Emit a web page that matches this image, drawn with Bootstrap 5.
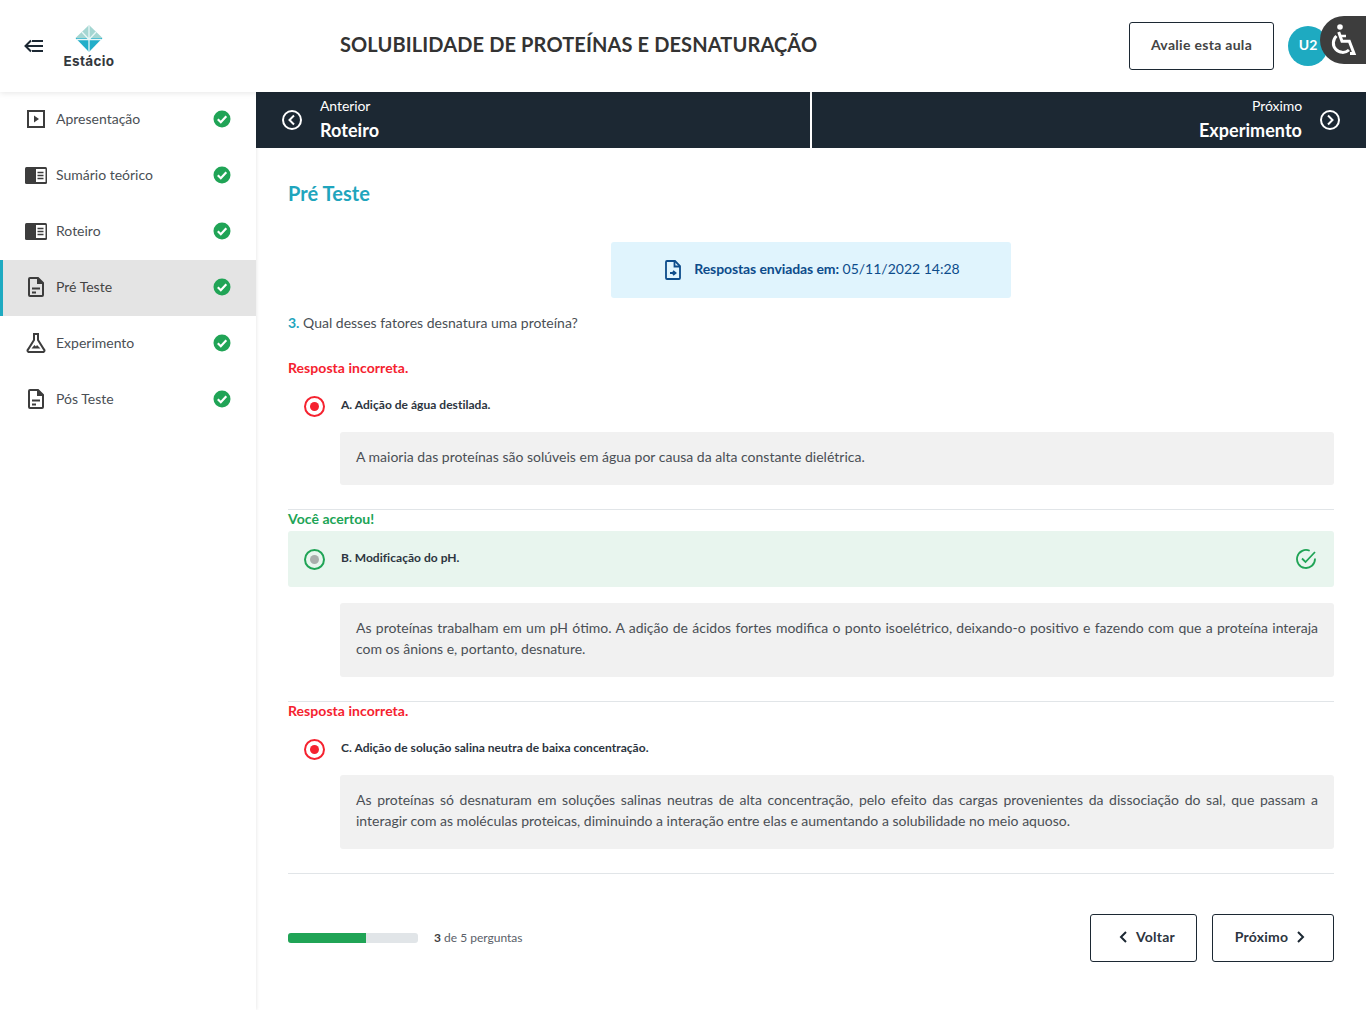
<!DOCTYPE html>
<html lang="pt-BR">
<head>
<meta charset="utf-8">
<title>Solubilidade de proteínas e desnaturação</title>
<link href="https://cdn.jsdelivr.net/npm/bootstrap@5.3.0/dist/css/bootstrap.min.css" rel="stylesheet">
<style>
html,body{height:100%}
body{font-family:Lato,"Liberation Sans",sans-serif;font-size:14px;color:#3d3d3d;background:#fff;overflow:hidden}
.top-head{height:92px;background:#fff;position:relative;z-index:3;box-shadow:0 1px 6px rgba(0,0,0,.1)}
.back-zone{width:340px;flex:none;padding-left:24px}
.logo-box{width:52px;margin-left:19px;line-height:1}
.logo-name{font-family:Inter,"Liberation Sans",sans-serif;font-weight:700;font-size:13.500px;color:#33383d;letter-spacing:.35px;line-height:14px;margin-top:2px;margin-left:-2px;margin-right:-2px}
.logo-mark{display:block;margin:0 auto}
.lesson-title{font-size:20px;font-weight:700;color:#333;letter-spacing:.12px;margin:0;line-height:24px;position:relative;top:-2px}
.rate-btn{width:145px;height:48px;border:1px solid #1c2833;border-radius:3px;font-size:14px;font-weight:700;color:#444;background:#fff;letter-spacing:.3px;padding:0 0 3px;margin-right:14px}
.user-dot{width:40px;height:40px;border-radius:50%;background:#1eaac1;color:#fff;font-weight:700;font-size:14px;margin-right:38px;padding-bottom:3px}
.a11y-tab{position:absolute;right:0;top:16px;width:46px;height:48px;background:#3d3d3d;border-radius:24px 0 0 24px}
.page-body{height:918px}
.side-col{width:256px;flex:none;box-shadow:1px 0 3px rgba(0,0,0,.08);position:relative;z-index:2;background:#fff}
.side-item{height:56px;padding:0 25px 2px 25px;color:#4a4f55;font-size:14px;text-decoration:none}
.side-item.on{background:#e4e4e4;box-shadow:inset 3px 0 0 #1eaac1;color:#444}
.side-ico{width:31px;flex:none;display:flex}
.book-ico{padding-top:1px}
.side-name{padding-bottom:2px}
.pager{height:56px;background:#1c2833;color:#fff}
.pager-cell{flex:1 1 0;padding:0 26px 0 26px;min-width:0}
.pager-cell+.pager-cell{border-left:2px solid #fff}
.pager-text{padding-bottom:2px}
.pager-small{font-size:14px;line-height:18px;letter-spacing:-.08px;margin-bottom:3px}
.pager-big{font-size:18px;font-weight:700;line-height:24px;letter-spacing:.05px}
.gap-left{margin-left:18px}
.gap-right{margin-right:18px}
.main-pad{padding:31px 32px 0}
.sect-title{font-size:20px;font-weight:700;color:#1fa5bd;line-height:28px;margin:0 0 35px;letter-spacing:.05px}
.sent-note{width:400px;height:56px;background:#e0f4fd;border-radius:3px;color:#0d4c8b;font-size:14px;margin:0 auto 16px;padding-left:2px}
.sent-note span{padding-bottom:3px}
.sent-note b{letter-spacing:-.1px}
.ask{line-height:17px;font-size:14px;color:#4a4f55;margin-bottom:28px}
.ask b{color:#1fa5bd}
.verdict{font-weight:700;font-size:14px;line-height:20px;margin-top:-1px;margin-bottom:2px;letter-spacing:.05px}
.verdict.bad{color:#f5222f}
.verdict.good{color:#20a456}
.opt-row{height:52px;padding-left:16px}
.opt-row.hit{height:56px;background:#e8f5ee;border-radius:3px;padding-right:18px}
.opt-label{font-size:12px;font-weight:700;color:#2d3540;margin-left:16px;position:relative;top:-1px;letter-spacing:.03px}
.expl{margin-left:52px;background:#f1f1f1;border-radius:3px;padding:14px 16px 18px;line-height:21px;color:#4a4f55;font-size:14px;text-align:justify}
.rule-line{border-top:1px solid #e1e5e8}
.foot-bar{margin-top:40px}
.prog{width:130px;height:10px;background:#e1e5e8;border-radius:3px;overflow:hidden}
.prog-fill{height:100%;background:#20a456}
.prog-text{font-size:12px;color:#5a6068;margin-left:16px}
.prog-text b{color:#3d3d3d}
.nav-btn{height:48px;border:1px solid #1c2833;border-radius:3px;background:#fff;font-weight:700;font-size:14px;color:#2d3540;letter-spacing:.2px;padding:0 0 3px}
.btn-back{width:107px;padding-left:7px;margin-right:15px}
.btn-next{width:122px;padding-right:6px}
</style>
</head>
<body>
<header class="top-head d-flex align-items-center">
  <div class="back-zone d-flex align-items-center">
    <svg width="20" height="14" viewBox="0 0 20 14" fill="none" stroke="#1c2833" stroke-width="2"><path d="M7 1.500 1.500 7 7 12.500M1.500 7H19M8 2h11M8 12h11"/></svg>
    <div class="logo-box text-center">
      <svg class="logo-mark" width="28" height="27" viewBox="0 0 28 27"><path d="M14 0 27.500 13H.5z" fill="#a4d6d2"/><path d="M.5 13h27L14 27z" fill="#22aec9"/><path d="M14 0v27M2 14.500h24M7 7 14 14.500 21 7" stroke="#e8f6f6" stroke-width="1.300" fill="none"/></svg>
      <div class="logo-name text-nowrap">Estácio</div>
    </div>
  </div>
  <h1 class="lesson-title flex-grow-1">SOLUBILIDADE DE PROTEÍNAS E DESNATURAÇÃO</h1>
  <button class="rate-btn" type="button">Avalie esta aula</button>
  <div class="user-dot d-flex align-items-center justify-content-center">U2</div>
  <div class="a11y-tab d-flex align-items-center justify-content-center">
    <svg width="28" height="36" viewBox="0 0 28 36" fill="none" stroke="#fff" stroke-width="3"><circle cx="11" cy="5" r="2.800" fill="#fff" stroke="none"/><path d="M9.700 10 13 19.300h7.300L25 31.500h-4"/><path d="M11 14h6" stroke-width="2.500"/><path d="M7.500 14A9 9 0 1 0 20 28"/></svg>
  </div>
</header>
<div class="page-body d-flex">
  <nav class="side-col">
    <a class="side-item d-flex align-items-center" href="#">
      <span class="side-ico"><svg width="22" height="18" viewBox="0 0 22 18"><rect x="3" y="1" width="16" height="16" fill="none" stroke="#3d3d3d" stroke-width="2"/><path d="M9 5.500 14 9 9 12.500z" fill="#3d3d3d"/></svg></span>
      <span class="side-name flex-grow-1">Apresentação</span>
      <svg width="18" height="18" viewBox="0 0 18 18"><circle cx="9" cy="9" r="8.500" fill="#20a456"/><path d="M4.800 9.300 7.800 12.200 13.300 6.300" fill="none" stroke="#fff" stroke-width="2.200"/></svg>
    </a>
    <a class="side-item d-flex align-items-center" href="#">
      <span class="side-ico book-ico"><svg width="22" height="17" viewBox="0 0 22 17"><rect width="22" height="17" rx="1.500" fill="#3d3d3d"/><rect x="11" y="2" width="9.500" height="13" fill="#fff"/><path d="M12.500 5.500h6M12.500 8.500h6M12.500 11.500h6" stroke="#3d3d3d" stroke-width="1.600"/></svg></span>
      <span class="side-name flex-grow-1">Sumário teórico</span>
      <svg width="18" height="18" viewBox="0 0 18 18"><circle cx="9" cy="9" r="8.500" fill="#20a456"/><path d="M4.800 9.300 7.800 12.200 13.300 6.300" fill="none" stroke="#fff" stroke-width="2.200"/></svg>
    </a>
    <a class="side-item d-flex align-items-center" href="#">
      <span class="side-ico book-ico"><svg width="22" height="17" viewBox="0 0 22 17"><rect width="22" height="17" rx="1.500" fill="#3d3d3d"/><rect x="11" y="2" width="9.500" height="13" fill="#fff"/><path d="M12.500 5.500h6M12.500 8.500h6M12.500 11.500h6" stroke="#3d3d3d" stroke-width="1.600"/></svg></span>
      <span class="side-name flex-grow-1">Roteiro</span>
      <svg width="18" height="18" viewBox="0 0 18 18"><circle cx="9" cy="9" r="8.500" fill="#20a456"/><path d="M4.800 9.300 7.800 12.200 13.300 6.300" fill="none" stroke="#fff" stroke-width="2.200"/></svg>
    </a>
    <a class="side-item on d-flex align-items-center" href="#">
      <span class="side-ico"><svg width="22" height="20" viewBox="0 0 22 20" fill="none" stroke="#3d3d3d" stroke-width="2"><path d="M5 1h8l5 5v12a1 1 0 0 1-1 1H5a1 1 0 0 1-1-1V2a1 1 0 0 1 1-1z"/><path d="M13 1v5h5" fill="#3d3d3d"/><path d="M7 11.500h8M7 15.500h4"/></svg></span>
      <span class="side-name flex-grow-1">Pré Teste</span>
      <svg width="18" height="18" viewBox="0 0 18 18"><circle cx="9" cy="9" r="8.500" fill="#20a456"/><path d="M4.800 9.300 7.800 12.200 13.300 6.300" fill="none" stroke="#fff" stroke-width="2.200"/></svg>
    </a>
    <a class="side-item d-flex align-items-center" href="#">
      <span class="side-ico"><svg width="22" height="20" viewBox="0 0 22 20" fill="none" stroke="#3d3d3d" stroke-width="2"><path d="M8 1h6M9 1v6L3 16.500A1.500 1.500 0 0 0 4.500 19h13a1.500 1.500 0 0 0 1.500-2.500L13 7V1"/><path d="M6.500 15.500l3-3.500 1.500 1.500 1-1.500 3.500 3.500z" fill="#3d3d3d" stroke="none"/></svg></span>
      <span class="side-name flex-grow-1">Experimento</span>
      <svg width="18" height="18" viewBox="0 0 18 18"><circle cx="9" cy="9" r="8.500" fill="#20a456"/><path d="M4.800 9.300 7.800 12.200 13.300 6.300" fill="none" stroke="#fff" stroke-width="2.200"/></svg>
    </a>
    <a class="side-item d-flex align-items-center" href="#">
      <span class="side-ico"><svg width="22" height="20" viewBox="0 0 22 20" fill="none" stroke="#3d3d3d" stroke-width="2"><path d="M5 1h8l5 5v12a1 1 0 0 1-1 1H5a1 1 0 0 1-1-1V2a1 1 0 0 1 1-1z"/><path d="M13 1v5h5" fill="#3d3d3d"/><path d="M7 11.500h8M7 15.500h4"/></svg></span>
      <span class="side-name flex-grow-1">Pós Teste</span>
      <svg width="18" height="18" viewBox="0 0 18 18"><circle cx="9" cy="9" r="8.500" fill="#20a456"/><path d="M4.800 9.300 7.800 12.200 13.300 6.300" fill="none" stroke="#fff" stroke-width="2.200"/></svg>
    </a>
  </nav>
  <main class="flex-grow-1">
    <div class="pager d-flex">
      <div class="pager-cell d-flex align-items-center">
        <svg width="20" height="20" viewBox="0 0 20 20" fill="none" stroke="#fff" stroke-width="2"><circle cx="10" cy="10" r="9"/><path d="M12 5.500 7.500 10l4.500 4.500"/></svg>
        <div class="gap-left pager-text"><div class="pager-small">Anterior</div><div class="pager-big">Roteiro</div></div>
      </div>
      <div class="pager-cell d-flex align-items-center justify-content-end">
        <div class="text-end gap-right pager-text"><div class="pager-small">Próximo</div><div class="pager-big">Experimento</div></div>
        <svg width="20" height="20" viewBox="0 0 20 20" fill="none" stroke="#fff" stroke-width="2"><circle cx="10" cy="10" r="9"/><path d="M8 5.500 12.500 10 8 14.500"/></svg>
      </div>
    </div>
    <div class="main-pad">
      <h2 class="sect-title">Pré Teste</h2>
      <div class="sent-note d-flex align-items-center justify-content-center">
        <svg class="me-2" width="18" height="20" viewBox="0 0 18 20" fill="none" stroke="#0d4c8b" stroke-width="1.800"><path d="M3 1h8l5 5v12a1 1 0 0 1-1 1H3a1 1 0 0 1-1-1V2a1 1 0 0 1 1-1z"/><path d="M10.500 1v5.500H16M6 13h5M9 11l2.500 2L9 15"/></svg>
        <span class="ms-1"><b>Respostas enviadas em:</b> 05/11/2022 14:28</span>
      </div>
      <p class="ask"><b>3.</b> Qual desses fatores desnatura uma proteína?</p>

      <div class="verdict bad">Resposta incorreta.</div>
      <div class="opt-row d-flex align-items-center">
        <svg width="21" height="21" viewBox="0 0 21 21"><circle cx="10.500" cy="10.500" r="9.500" fill="none" stroke="#f5222f" stroke-width="2"/><circle cx="10.500" cy="10.500" r="4.500" fill="#f5222f"/></svg>
        <span class="opt-label">A. Adição de água destilada.</span>
      </div>
      <div class="expl">A maioria das proteínas são solúveis em água por causa da alta constante dielétrica.</div>
      <div class="rule-line mt-4"></div>

      <div class="verdict good">Você acertou!</div>
      <div class="opt-row hit d-flex align-items-center">
        <svg width="21" height="21" viewBox="0 0 21 21"><circle cx="10.500" cy="10.500" r="9.500" fill="none" stroke="#20a456" stroke-width="2"/><circle cx="10.500" cy="10.500" r="4.500" fill="#a9aeac"/></svg>
        <span class="opt-label flex-grow-1">B. Modificação do pH.</span>
        <svg width="20" height="20" viewBox="0 0 20 20" fill="none" stroke="#20a456" stroke-width="1.800"><path d="M19 9.500V10a9 9 0 1 1-5.300-8.200"/><path d="M6 9.500l3.500 3.500L19 3"/></svg>
      </div>
      <div class="expl mt-3">As proteínas trabalham em um pH ótimo. A adição de ácidos fortes modifica o ponto isoelétrico, deixando-o positivo e fazendo com que a proteína interaja com os ânions e, portanto, desnature.</div>
      <div class="rule-line mt-4"></div>

      <div class="verdict bad">Resposta incorreta.</div>
      <div class="opt-row d-flex align-items-center">
        <svg width="21" height="21" viewBox="0 0 21 21"><circle cx="10.500" cy="10.500" r="9.500" fill="none" stroke="#f5222f" stroke-width="2"/><circle cx="10.500" cy="10.500" r="4.500" fill="#f5222f"/></svg>
        <span class="opt-label">C. Adição de solução salina neutra de baixa concentração.</span>
      </div>
      <div class="expl">As proteínas só desnaturam em soluções salinas neutras de alta concentração, pelo efeito das cargas provenientes da dissociação do sal, que passam a interagir com as moléculas proteicas, diminuindo a interação entre elas e aumentando a solubilidade no meio aquoso.</div>
      <div class="rule-line mt-4"></div>

      <div class="foot-bar d-flex align-items-center">
        <div class="prog"><div class="prog-fill" style="width:60%"></div></div>
        <span class="prog-text flex-grow-1"><b>3</b> de 5 perguntas</span>
        <button class="nav-btn btn-back d-flex align-items-center justify-content-center" type="button">
          <svg class="me-2" width="9" height="12" viewBox="0 0 9 12" fill="none" stroke="#1c2833" stroke-width="2"><path d="M7 1 2 6l5 5"/></svg>Voltar
        </button>
        <button class="nav-btn btn-next d-flex align-items-center justify-content-center" type="button">
          Próximo<svg class="ms-2" width="9" height="12" viewBox="0 0 9 12" fill="none" stroke="#1c2833" stroke-width="2"><path d="M2 1l5 5-5 5"/></svg>
        </button>
      </div>
    </div>
  </main>
</div>
<script src="https://cdn.jsdelivr.net/npm/bootstrap@5.3.0/dist/js/bootstrap.bundle.min.js"></script>
</body>
</html>
